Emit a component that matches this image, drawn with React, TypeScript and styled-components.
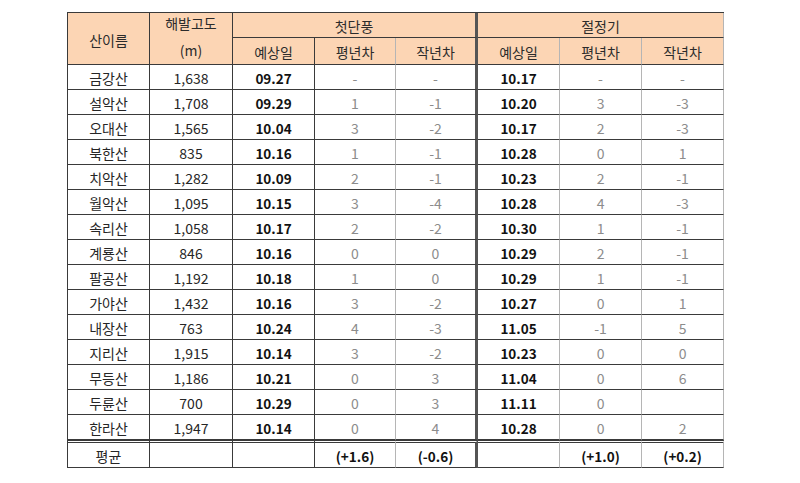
import styled, { createGlobalStyle } from "styled-components";

const GlobalStyle = createGlobalStyle`
  * { box-sizing: border-box; }
  body {
    margin: 0;
    background: #ffffff;
    font-family: "Noto Sans CJK KR", "Noto Sans", sans-serif;
  }
`;

const Page = styled.div`
  padding: 12px 0 0 67px;
`;

const Table = styled.table`
  border-collapse: separate;
  border-spacing: 0;
  border-top: 1px solid #3a3a3a;
  border-left: 1px solid #3a3a3a;
  table-layout: fixed;
  width: 656px;
  font-size: 13px;
  color: #262626;
`;

type Edge = "dark" | "light" | "thick" | "none";
type Kind = "name" | "num" | "date" | "diff" | "avg";

const edgeStyle = (edge?: Edge) => {
  switch (edge) {
    case "light":
      return "1px solid #b5b5b5";
    case "thick":
      return "3px solid #555555";
    case "none":
      return "0";
    default:
      return "1px solid #3a3a3a";
  }
};

const Head = styled.th<{ $right?: Edge; $h?: number }>`
  background: #fcd5b4;
  font-weight: 400;
  font-size: 14px;
  color: #2b2b2b;
  text-align: center;
  padding: 2px 0 0;
  height: ${(p) => p.$h ?? 25}px;
  border-right: ${(p) => edgeStyle(p.$right)};
  border-bottom: 1px solid #3a3a3a;
`;

const UnitHead = styled(Head)`
  vertical-align: top;
  padding: 0;
`;

const UnitLine = styled.div<{ $lh: number; $pt?: number }>`
  line-height: ${(p) => p.$lh}px;
  padding-top: ${(p) => p.$pt ?? 0}px;
`;

const sizeOf = (k?: Kind) => (k === "date" || k === "avg" ? 13.5 : 14);

const Cell = styled.td<{ $right?: Edge; $kind?: Kind }>`
  text-align: center;
  padding: 1px 0 0;
  height: 25px;
  border-right: ${(p) => edgeStyle(p.$right)};
  border-bottom: 1px solid #3a3a3a;
  font-weight: ${(p) => (p.$kind === "date" || p.$kind === "avg" ? 700 : 400)};
  font-size: ${(p) => sizeOf(p.$kind)}px;
  color: ${(p) =>
    p.$kind === "diff" ? "#8c8c8c" : p.$kind === "date" || p.$kind === "avg" ? "#111" : "#262626"};
`;

const FootRow = styled.tr`
  td {
    border-top: 3px double #3a3a3a;
    height: 28px;
  }
`;

type Row = [string, string, string, string, string, string, string, string];

const rows: Row[] = [
  ["금강산", "1,638", "09.27", "-", "-", "10.17", "-", "-"],
  ["설악산", "1,708", "09.29", "1", "-1", "10.20", "3", "-3"],
  ["오대산", "1,565", "10.04", "3", "-2", "10.17", "2", "-3"],
  ["북한산", "835", "10.16", "1", "-1", "10.28", "0", "1"],
  ["치악산", "1,282", "10.09", "2", "-1", "10.23", "2", "-1"],
  ["월악산", "1,095", "10.15", "3", "-4", "10.28", "4", "-3"],
  ["속리산", "1,058", "10.17", "2", "-2", "10.30", "1", "-1"],
  ["계룡산", "846", "10.16", "0", "0", "10.29", "2", "-1"],
  ["팔공산", "1,192", "10.18", "1", "0", "10.29", "1", "-1"],
  ["가야산", "1,432", "10.16", "3", "-2", "10.27", "0", "1"],
  ["내장산", "763", "10.24", "4", "-3", "11.05", "-1", "5"],
  ["지리산", "1,915", "10.14", "3", "-2", "10.23", "0", "0"],
  ["무등산", "1,186", "10.21", "0", "3", "11.04", "0", "6"],
  ["두륜산", "700", "10.29", "0", "3", "11.11", "0", ""],
  ["한라산", "1,947", "10.14", "0", "4", "10.28", "0", "2"],
];

const kinds: Kind[] = ["name", "num", "date", "diff", "diff", "date", "diff", "diff"];
const rights: Edge[] = ["dark", "dark", "dark", "light", "thick", "light", "light", "light"];

export default function App() {
  return (
    <>
      <GlobalStyle />
      <Page>
        <Table>
          <colgroup>
            <col style={{ width: 82 }} />
            <col style={{ width: 83 }} />
            <col style={{ width: 82 }} />
            <col style={{ width: 81 }} />
            <col style={{ width: 82 }} />
            <col style={{ width: 82 }} />
            <col style={{ width: 82 }} />
            <col style={{ width: 82 }} />
          </colgroup>
          <thead>
            <tr>
              <Head rowSpan={2} $h={52}>산이름</Head>
              <UnitHead rowSpan={2} $h={52}>
                <UnitLine $lh={21}>해발고도</UnitLine>
                <UnitLine $lh={24} $pt={4}>(m)</UnitLine>
              </UnitHead>
              <Head colSpan={3} $right="thick">첫단풍</Head>
              <Head colSpan={3} $right="light">절정기</Head>
            </tr>
            <tr>
              <Head $h={27}>예상일</Head>
              <Head $h={27} $right="light">평년차</Head>
              <Head $h={27} $right="thick">작년차</Head>
              <Head $h={27} $right="light">예상일</Head>
              <Head $h={27} $right="light">평년차</Head>
              <Head $h={27} $right="light">작년차</Head>
            </tr>
          </thead>
          <tbody>
            {rows.map((row) => (
              <tr key={row[0]}>
                {row.map((v, i) => (
                  <Cell key={i} $kind={kinds[i]} $right={rights[i]}>
                    {v}
                  </Cell>
                ))}
              </tr>
            ))}
            <FootRow>
              <Cell $kind="name">평균</Cell>
              <Cell />
              <Cell />
              <Cell $kind="avg" $right="light">(+1.6)</Cell>
              <Cell $kind="avg" $right="thick">(-0.6)</Cell>
              <Cell $right="light" />
              <Cell $kind="avg" $right="light">(+1.0)</Cell>
              <Cell $kind="avg" $right="light">(+0.2)</Cell>
            </FootRow>
          </tbody>
        </Table>
      </Page>
    </>
  );
}
